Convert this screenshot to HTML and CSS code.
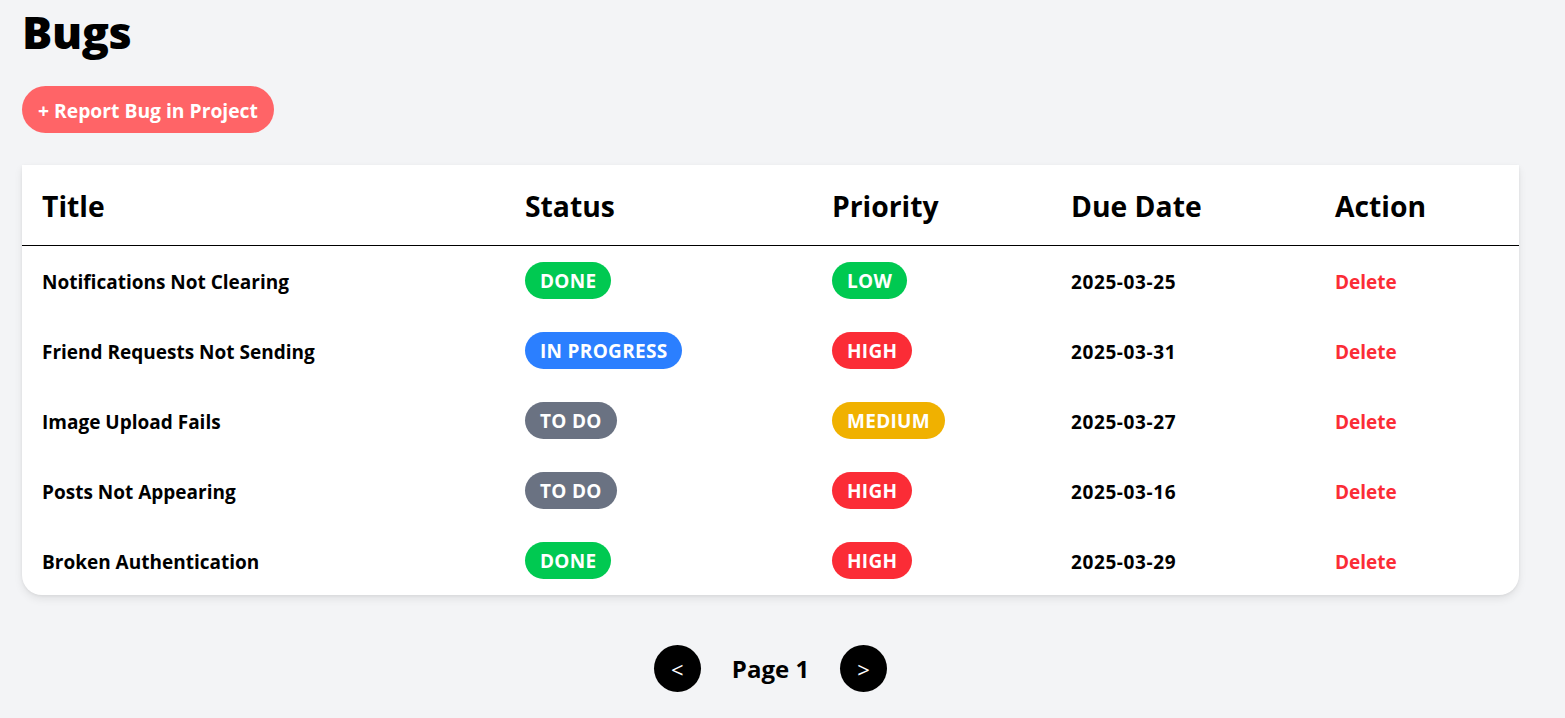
FILE: index.html
```html
<!DOCTYPE html>
<html lang="en">
<head>
<meta charset="utf-8">
<title>Bugs</title>
<link rel="stylesheet" href="styles.css">
</head>
<body>
<main class="page">
  <h1 class="title">Bugs</h1>
  <button class="report-btn">+ Report Bug in Project</button>
  <div class="card">
    <table class="bugs">
      <thead>
        <tr>
          <th class="c-title">Title</th>
          <th class="c-status">Status</th>
          <th class="c-priority">Priority</th>
          <th class="c-due">Due Date</th>
          <th class="c-action">Action</th>
        </tr>
      </thead>
      <tbody>
        <tr>
          <td class="txt">Notifications Not Clearing</td>
          <td><span class="badge green">DONE</span></td>
          <td><span class="badge green">LOW</span></td>
          <td class="txt date">2025-03-25</td>
          <td class="txt"><a class="delete">Delete</a></td>
        </tr>
        <tr>
          <td class="txt">Friend Requests Not Sending</td>
          <td><span class="badge blue">IN PROGRESS</span></td>
          <td><span class="badge red">HIGH</span></td>
          <td class="txt date">2025-03-31</td>
          <td class="txt"><a class="delete">Delete</a></td>
        </tr>
        <tr>
          <td class="txt">Image Upload Fails</td>
          <td><span class="badge gray">TO DO</span></td>
          <td><span class="badge yellow">MEDIUM</span></td>
          <td class="txt date">2025-03-27</td>
          <td class="txt"><a class="delete">Delete</a></td>
        </tr>
        <tr>
          <td class="txt">Posts Not Appearing</td>
          <td><span class="badge gray">TO DO</span></td>
          <td><span class="badge red">HIGH</span></td>
          <td class="txt date">2025-03-16</td>
          <td class="txt"><a class="delete">Delete</a></td>
        </tr>
        <tr>
          <td class="txt">Broken Authentication</td>
          <td><span class="badge green">DONE</span></td>
          <td><span class="badge red">HIGH</span></td>
          <td class="txt date">2025-03-29</td>
          <td class="txt"><a class="delete">Delete</a></td>
        </tr>
      </tbody>
    </table>
  </div>
  <nav class="pager">
    <button class="pager-btn">&lt;</button>
    <span class="pager-label">Page 1</span>
    <button class="pager-btn">&gt;</button>
  </nav>
</main>
</body>
</html>
```
FILE: styles.css
```css
* { box-sizing: border-box; }
html, body { margin: 0; padding: 0; }
body {
  background: #f3f4f6;
  font-family: "Open Sans", "Noto Sans", sans-serif;
  color: #000;
}
.page {
  width: 1497px;
  margin-left: 22px;
  padding-top: 4px;
}
.title {
  margin: 0;
  font-size: 45px;
  font-weight: 800;
  line-height: 56px;
  letter-spacing: -0.4px;
}
.report-btn {
  display: inline-flex;
  align-items: center;
  margin-top: 26px;
  height: 47px;
  padding: 1px 16px 0;
  border: none;
  border-radius: 999px;
  background: #ff6467;
  color: #fff;
  font-family: inherit;
  font-weight: 700;
  font-size: 19.3px;
}
.card {
  margin-top: 32px;
  background: #fff;
  border-radius: 0 0 20px 20px;
  box-shadow: 0 4px 8px rgba(0,0,0,0.08), 0 1px 3px rgba(0,0,0,0.06);
}
.bugs {
  width: 100%;
  border-collapse: collapse;
  table-layout: fixed;
}
.bugs th {
  text-align: left;
  font-size: 28.3px;
  font-weight: 700;
  height: 80px;
  padding: 2px 20px 0;
  border-bottom: 1px solid #000;
}
.c-title { width: 483px; }
.c-status { width: 307px; }
.c-priority { width: 239px; }
.c-due { width: 264px; }
.c-action { width: 204px; }
.bugs td {
  height: 70px;
  padding: 0 20px;
  font-size: 19px;
  font-weight: 700;
}
.bugs td.txt { padding-top: 4px; }
.bugs td.date { letter-spacing: 0.6px; }
.badge {
  display: inline-block;
  height: 37px;
  line-height: 35px;
  padding: 2px 15px 0;
  border-radius: 999px;
  color: #fff;
  font-size: 19px;
  font-weight: 700;
  letter-spacing: 0.3px;
}
.green { background: #00c951; }
.blue { background: #2b7fff; }
.red { background: #fb2c36; }
.gray { background: #6a7282; }
.yellow { background: #f0b100; }
.delete {
  color: #fb2c36;
  cursor: pointer;
}
.pager {
  display: flex;
  justify-content: center;
  align-items: center;
  gap: 31px;
  margin-top: 50px;
}
.pager-btn {
  width: 47px;
  height: 47px;
  border-radius: 50%;
  border: none;
  background: #000;
  color: #fff;
  font-family: inherit;
  font-size: 22px;
  padding: 0;
}
.pager-label {
  font-size: 24px;
  font-weight: 700;
}
```
